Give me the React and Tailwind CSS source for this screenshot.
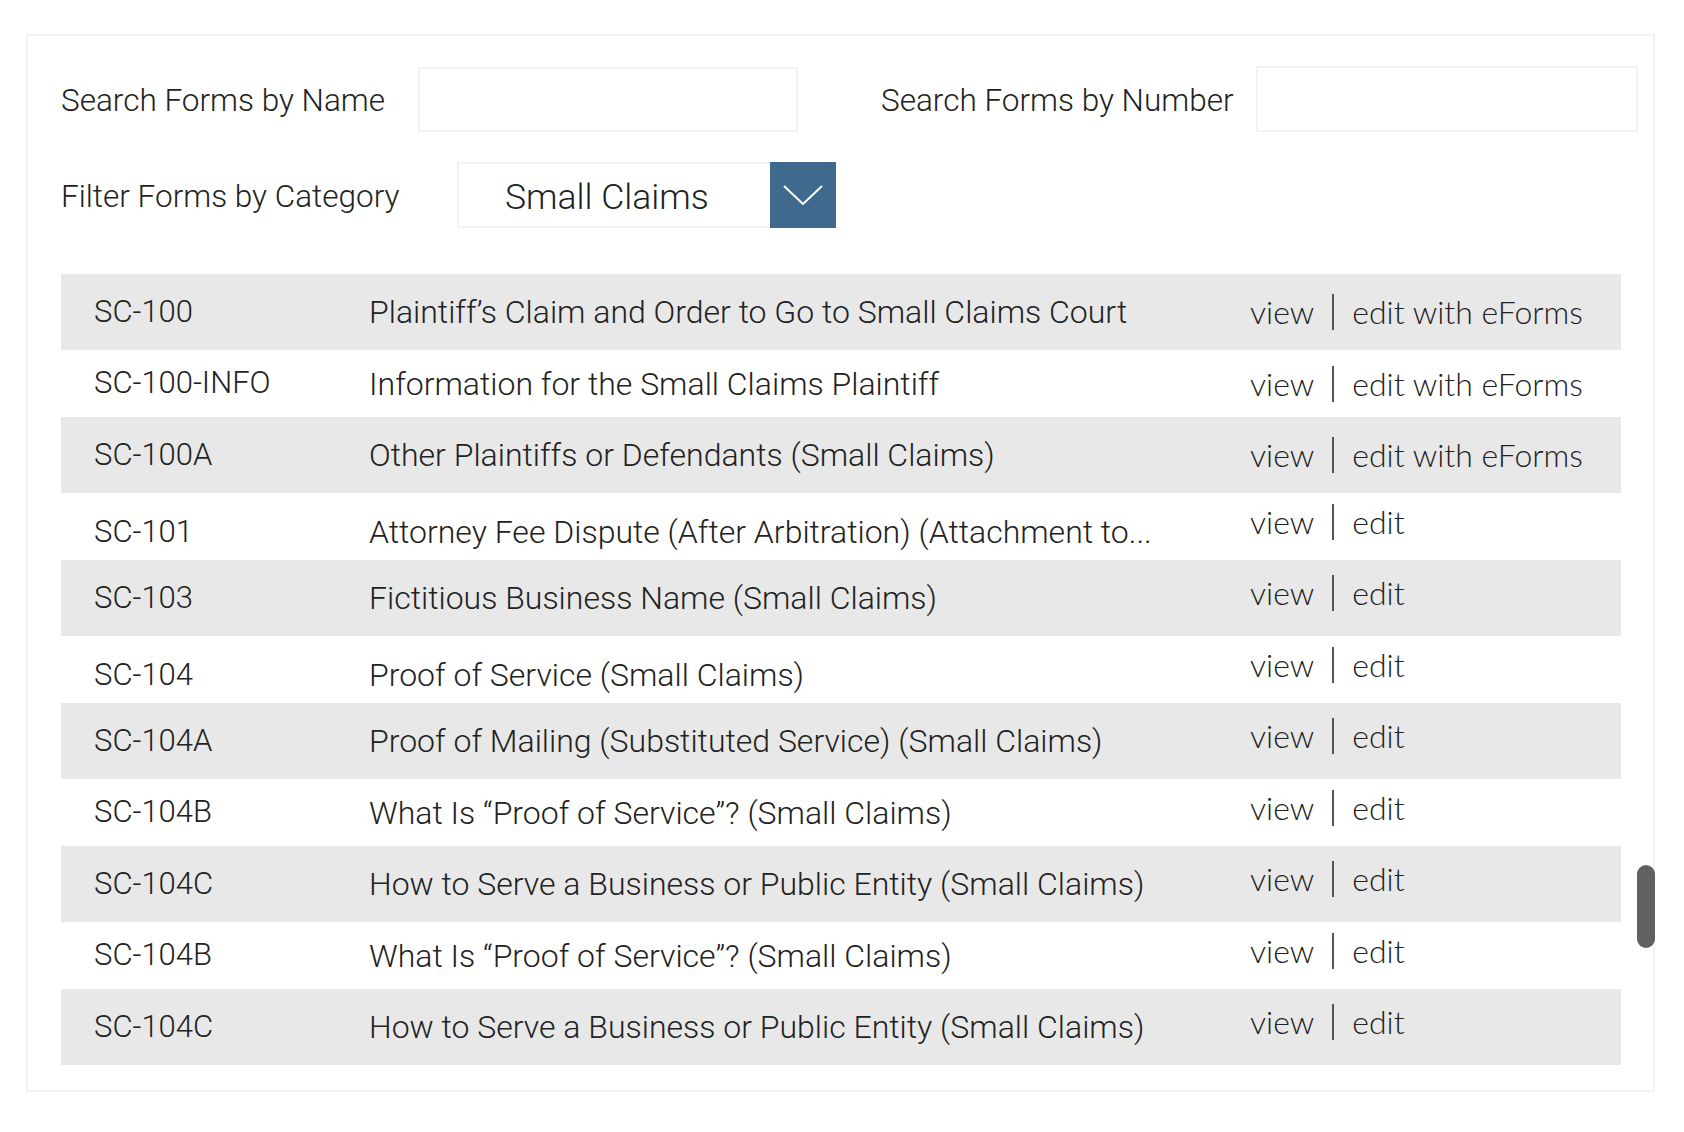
import React from "react";

const rows = [
  { code: "SC-100", title: "Plaintiff’s Claim and Order to Go to Small Claims Court", eforms: true },
  { code: "SC-100-INFO", title: "Information for the Small Claims Plaintiff", eforms: true },
  { code: "SC-100A", title: "Other Plaintiffs or Defendants (Small Claims)", eforms: true },
  { code: "SC-101", title: "Attorney Fee Dispute (After Arbitration) (Attachment to...", shift: true },
  { code: "SC-103", title: "Fictitious Business Name (Small Claims)" },
  { code: "SC-104", title: "Proof of Service (Small Claims)", shift: true },
  { code: "SC-104A", title: "Proof of Mailing (Substituted Service) (Small Claims)" },
  { code: "SC-104B", title: "What Is “Proof of Service”? (Small Claims)" },
  { code: "SC-104C", title: "How to Serve a Business or Public Entity (Small Claims)" },
  { code: "SC-104B", title: "What Is “Proof of Service”? (Small Claims)" },
  { code: "SC-104C", title: "How to Serve a Business or Public Entity (Small Claims)" },
];

const sans = "font-['Roboto','Liberation_Sans',sans-serif] font-light";
const lato = "font-['Lato','Liberation_Sans',sans-serif] font-light";

const FormRow = ({ row, index }) => {
  const gray = index % 2 === 0;
  return (
    <div
      className={`flex items-center ${gray ? "h-[76px] bg-[#e8e8e8]" : "h-[67px] bg-white"}`}
    >
      <div className={`flex flex-1 items-center ${row.shift ? "pt-[11px]" : ""}`}>
        <span className={`${sans} w-[308px] pl-[33px] text-[31px] text-[#222]`}>{row.code}</span>
        <span className={`${sans} whitespace-nowrap text-[32px] text-[#222]`}>{row.title}</span>
      </div>
      <div
        className={`${lato} flex w-[371px] items-center text-[32px] text-[#222] ${row.eforms ? "" : "-translate-y-[5px]"}`}
      >
        <span>view</span>
        <span className="mx-[18px] h-[36px] w-[2px] bg-[#555]" />
        <span>{row.eforms ? "edit with eForms" : "edit"}</span>
      </div>
    </div>
  );
};

const App = () => {
  return (
    <div className="h-[1132px] w-full bg-white pl-[26px] pt-[34px]">
      <div className="relative h-[1058px] w-[1629px] border-2 border-[#f2f2f2] pl-[33px] pt-[30px]">
        <div className="flex h-[66px] items-center">
          <label className={`${sans} w-[357px] pt-[4px] text-[31.5px] text-[#222]`}>Search Forms by Name</label>
          <input className="h-[65px] w-[380px] border-2 border-[#f2f2f2] outline-none" />
          <label className={`${sans} ml-[83px] w-[375px] pt-[4px] text-[31.5px] text-[#222]`}>Search Forms by Number</label>
          <input className="h-[66px] w-[382px] border-2 border-[#f2f2f2] outline-none" />
        </div>

        <div className="mt-[30px] flex h-[66px] items-center">
          <label className={`${sans} w-[396px] pt-[4px] text-[31.5px] text-[#222]`}>Filter Forms by Category</label>
          <div className="flex h-[66px] items-stretch">
            <div className={`${sans} flex w-[313px] items-center border-2 border-r-0 border-[#f2f2f2] pl-[46px] pt-[5px] text-[35.5px] text-[#222]`}>
              Small Claims
            </div>
            <button className="flex w-[66px] items-center justify-center bg-[#3f6a8e]">
              <svg width="40" height="20" viewBox="0 0 40 20" fill="none">
                <polyline points="1,1 20,19 39,1" stroke="white" strokeWidth="2" />
              </svg>
            </button>
          </div>
        </div>

        <div className="mt-[46px] w-[1560px]">
          {rows.map((row, i) => (
            <FormRow key={i} row={row} index={i} />
          ))}
        </div>

        <div className="absolute right-[-2px] top-[829px] h-[83px] w-[18px] rounded-full bg-[#616161]" />
      </div>
    </div>
  );
};

export default App;
